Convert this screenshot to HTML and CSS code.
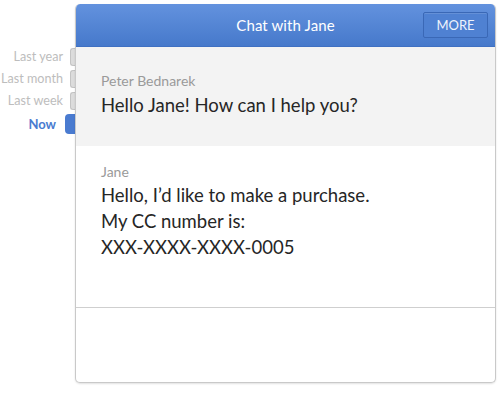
FILE: index.html
```html
<!DOCTYPE html>
<html>
<head>
<meta charset="utf-8">
<link rel="stylesheet" href="styles.css">
</head>
<body>
<div class="page">
  <nav class="timeline">
    <div class="tl-row"><span class="tl-label">Last year</span><span class="tl-tab"></span></div>
    <div class="tl-row"><span class="tl-label">Last month</span><span class="tl-tab"></span></div>
    <div class="tl-row"><span class="tl-label">Last week</span><span class="tl-tab"></span></div>
    <div class="tl-row tl-active"><span class="tl-label">Now</span><span class="tl-tab"></span></div>
  </nav>
  <section class="chat">
    <header class="chat-head">
      <h1 class="chat-title">Chat with Jane</h1>
      <button class="more-btn">MORE</button>
    </header>
    <div class="msg msg-agent">
      <div class="msg-author">Peter Bednarek</div>
      <div class="msg-text">Hello Jane! How can I help you?</div>
    </div>
    <div class="msg msg-user">
      <div class="msg-author">Jane</div>
      <div class="msg-text">Hello, I’d like to make a purchase.<br>My CC number is:<br>XXX-XXXX-XXXX-0005</div>
    </div>
    <div class="chat-input"></div>
  </section>
</div>
</body>
</html>
```

FILE: styles.css
```css
* { box-sizing: border-box; }
html, body { margin: 0; padding: 0; background: #fff; }
body { font-family: Lato, "Open Sans", sans-serif; width: 500px; height: 400px; overflow: hidden; }

.page { display: flex; align-items: flex-start; }

.timeline {
  width: 75px;
  margin-top: 48px;
  display: flex;
  flex-direction: column;
  gap: 4px;
  flex-shrink: 0;
}
.tl-row {
  display: flex;
  justify-content: flex-end;
  align-items: center;
  gap: 7px;
  height: 18px;
}
.tl-label {
  font-size: 12.6px;
  color: #bdbdbd;
  white-space: nowrap;
  line-height: 14px;
}
.tl-tab {
  width: 5px;
  height: 18px;
  background: #dcdcdc;
  border: 1px solid #c4c4c4;
  border-right: none;
  border-radius: 3px 0 0 3px;
}
.tl-active { height: 20px; gap: 9px; }
.tl-active .tl-label { color: #4a7bd0; font-weight: 700; font-size: 13px; }
.tl-active .tl-tab {
  width: 10px;
  height: 20px;
  background: #4a7bd0;
  border: none;
  border-radius: 4px 0 0 4px;
}

.chat {
  margin-top: 4px;
  width: 421px;
  height: 379px;
  border: 1px solid #c9c9c9;
  border-top: none;
  border-radius: 5px;
  box-shadow: 0 1px 2px rgba(0,0,0,0.12);
  display: flex;
  flex-direction: column;
  overflow: hidden;
  background: #fff;
}
.chat-head {
  position: relative;
  height: 43px;
  flex-shrink: 0;
  background: linear-gradient(#6392de, #4679cb);
  border-bottom: 1px solid #3f70c2;
  display: flex;
  align-items: center;
  justify-content: center;
  margin: 0 -1px;
  border-radius: 5px 5px 0 0;
}
.chat-title {
  margin: 0;
  font-size: 15px;
  font-weight: 400;
  color: #fff;
  letter-spacing: 0.1px;
}
.more-btn {
  position: absolute;
  right: 8px;
  top: 8px;
  width: 65px;
  height: 26px;
  border: 1px solid #3a68b6;
  border-radius: 2px;
  background: #4f81d2;
  color: #eef3fc;
  font-family: Lato, sans-serif;
  font-size: 13px;
  padding: 0;
  box-shadow: inset 0 1px 0 rgba(255,255,255,0.12);
}

.msg { padding-left: 25px; }
.msg-author {
  font-size: 14px;
  line-height: 21px;
  color: #9a9a9a;
}
.msg-text {
  font-size: 18.5px;
  line-height: 26px;
  color: #262626;
  margin-top: 1px;
}
.msg-agent {
  background: #f3f3f3;
  height: 99px;
  padding-top: 23px;
  flex-shrink: 0;
}
.msg-user {
  height: 162px;
  padding-top: 15px;
  border-bottom: 1px solid #cfcfcf;
  flex-shrink: 0;
}
.msg-user .msg-text { margin-top: 0; }
.chat-input { flex: 1; }
```
